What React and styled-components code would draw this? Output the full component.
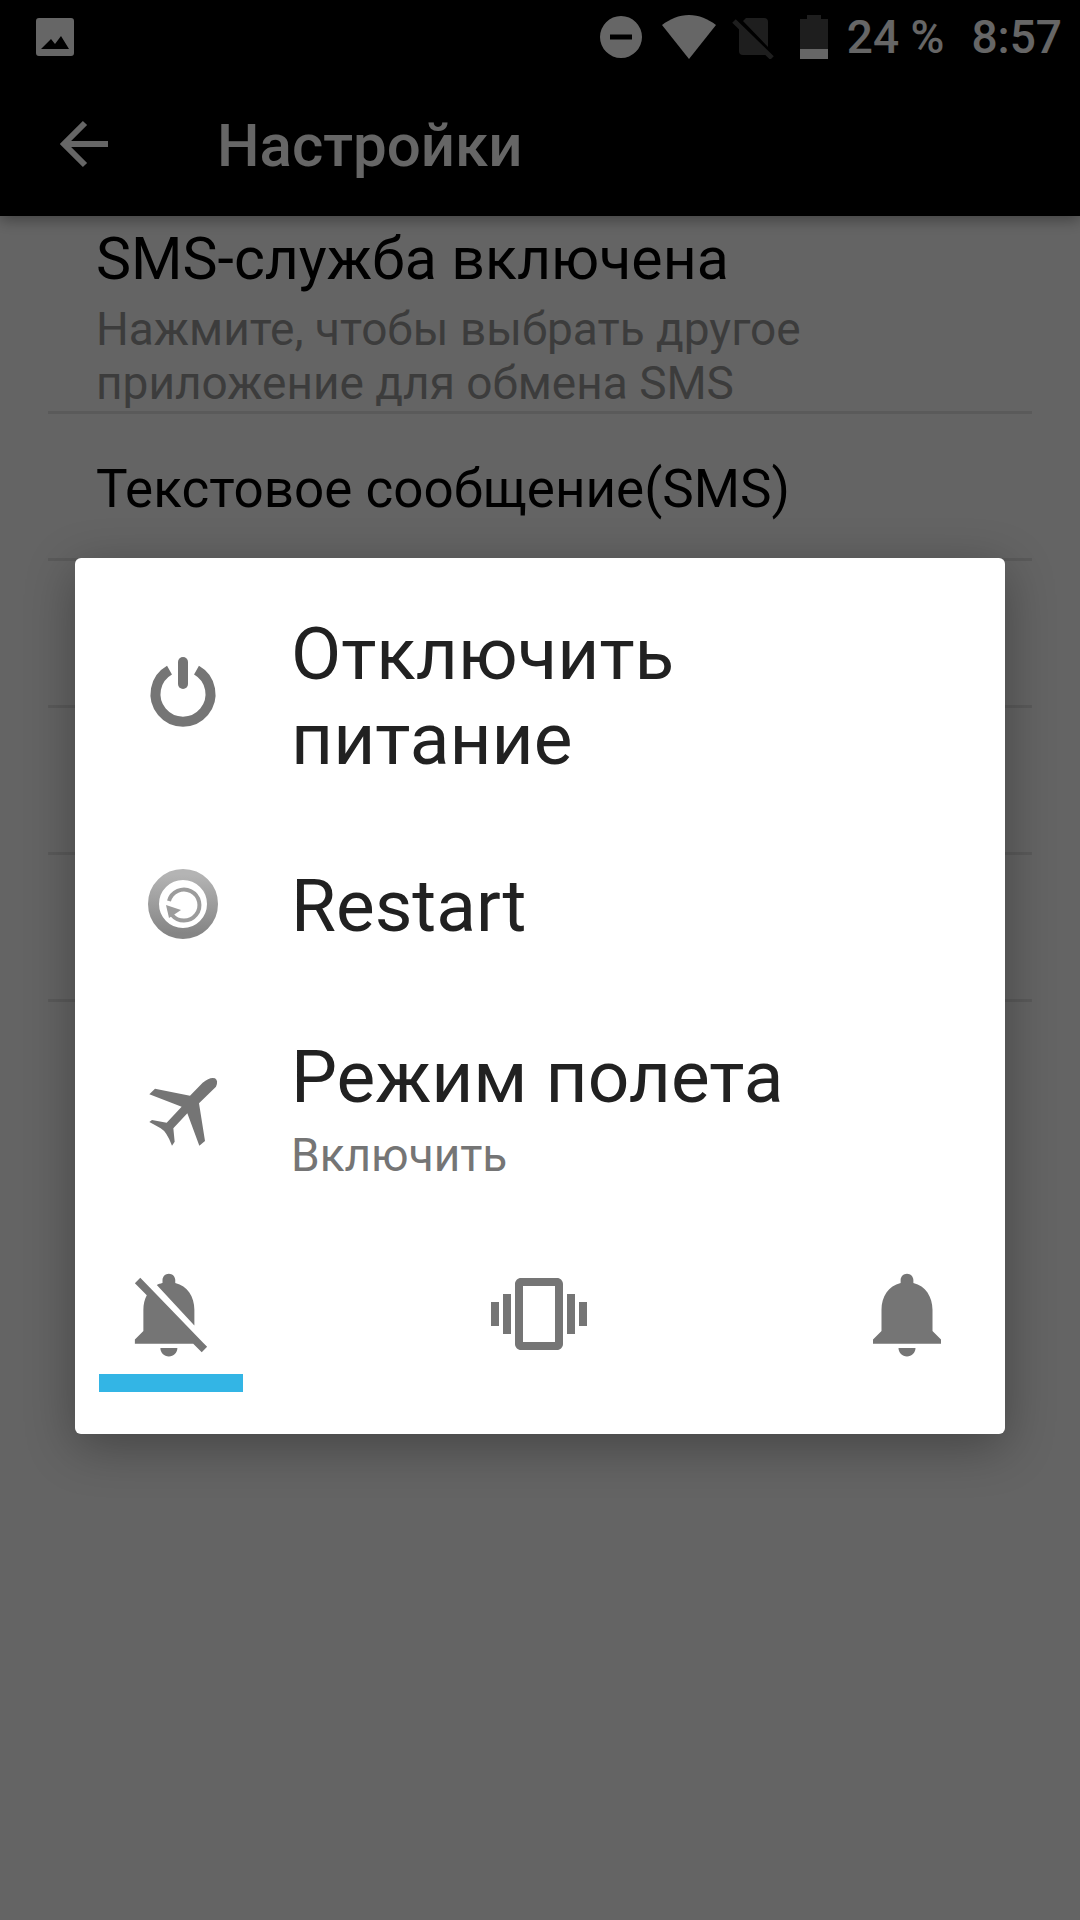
import React from 'react'
import styled, { createGlobalStyle } from 'styled-components'

const GlobalStyle = createGlobalStyle`
  html, body {
    margin: 0;
    padding: 0;
    background: #fafafa;
    font-family: Roboto, "Noto Sans", sans-serif;
  }
`

const Page = styled.div`
  position: relative;
  width: 1080px;
  height: 1920px;
  overflow: hidden;
  background: #fafafa;
`

const Header = styled.header`
  position: relative;
  z-index: 1;
  background: #000;
  box-shadow: 0 4px 14px rgba(0, 0, 0, 0.35);
`

const StatusBar = styled.div`
  height: 72px;
  box-sizing: border-box;
  display: flex;
  align-items: center;
  padding: 1px 18px 0 36px;
  color: #fff;
`

const StatusIcons = styled.div`
  margin-left: auto;
  display: flex;
  align-items: center;
`

const StatusGlyph = styled.svg`
  flex: none;
  margin-left: ${(p) => p.$left || 0}px;
`

const StatusText = styled.span`
  font-size: 46px;
  font-weight: 500;
  margin-left: ${(p) => p.$left}px;
`

const Toolbar = styled.div`
  height: 144px;
  display: flex;
  align-items: center;
  padding-left: 60px;
  color: #fff;
`

const ToolbarTitle = styled.h1`
  margin: 0 0 0 109px;
  font-size: 60px;
  font-weight: 500;
  line-height: 64px;
  position: relative;
  top: 2px;
`

const Row = styled.div`
  height: ${(p) => p.$height}px;
  box-sizing: border-box;
  margin: 0 48px;
  padding: ${(p) => p.$top || 0}px 48px 0;
  border-bottom: 3px solid #e1e1e1;
`

const RowTitle = styled.div`
  font-size: ${(p) => p.$size}px;
  line-height: 64px;
  color: #000;
`

const RowSummary = styled.div`
  font-size: 46px;
  line-height: 54px;
  color: #979797;
  margin-top: 11px;
`

const Scrim = styled.div`
  position: absolute;
  inset: 0;
  z-index: 2;
  background: rgba(0, 0, 0, 0.6);
  padding: 558px 75px 0;
`

const Dialog = styled.div`
  height: 876px;
  box-sizing: border-box;
  padding-top: 54px;
  background: #fff;
  border-radius: 6px;
  box-shadow: 0 12px 50px rgba(0, 0, 0, 0.32);
`

const Item = styled.div`
  height: ${(p) => p.$height}px;
  display: flex;
  align-items: center;
  padding-left: 71px;
  box-sizing: border-box;
`

const IconSlot = styled.div`
  width: 74px;
  height: 74px;
  flex: none;
  display: flex;
  align-items: center;
  justify-content: center;
  margin-right: 71px;
  position: relative;
  top: ${(p) => p.$shift || 0}px;

  svg {
    flex: none;
  }
`

const ItemLabel = styled.div`
  font-size: 73px;
  line-height: 85px;
  color: #212121;
`

const ItemStatus = styled.div`
  font-size: 46px;
  line-height: 56px;
  color: #757575;
  margin-top: 7px;
`

const Tabs = styled.div`
  display: flex;
  justify-content: space-between;
  padding: 0 26px 0 24px;
  margin-top: 76px;
`

const Tab = styled.div`
  width: 144px;
  height: 129px;
  display: flex;
  flex-direction: column;
  align-items: center;
`

const TabIcon = styled.div`
  height: 102px;
  display: flex;
  align-items: center;
  justify-content: center;
`

const TabBar = styled.div`
  width: 144px;
  height: 18px;
  margin-top: 9px;
  background: ${(p) => (p.$active ? '#33b5e5' : 'transparent')};
`

const GalleryIcon = () => (
  <svg width="38" height="38" viewBox="0 0 38 38">
    <path
      fillRule="evenodd"
      fill="currentColor"
      d="M3 0h32a3 3 0 0 1 3 3v32a3 3 0 0 1-3 3H3a3 3 0 0 1-3-3V3a3 3 0 0 1 3-3zM5 31h28l-8-13-6 8-4-5z"
    />
  </svg>
)

const MinusIcon = () => (
  <StatusGlyph width="42" height="42" viewBox="0 0 42 42">
    <path
      fillRule="evenodd"
      fill="currentColor"
      d="M21 0a21 21 0 1 1 0 42a21 21 0 0 1 0-42zM10 18.5v5h22v-5z"
    />
  </StatusGlyph>
)

const WifiIcon = () => (
  <StatusGlyph $left={20} width="54" height="44" viewBox="0 0 54 44">
    <path fill="currentColor" d="M27 44L0 10C8 4 17 0 27 0s19 4 27 10z" />
  </StatusGlyph>
)

const NoSimIcon = () => (
  <StatusGlyph $left={16} width="42" height="44" viewBox="0 0 42 44">
    <path fill="#4d4d4d" d="M14 3H32a4 4 0 0 1 4 4V32L11 6zM7 11L35 40H11a4 4 0 0 1-4-4z" />
    <path fill="none" stroke="#4d4d4d" strokeWidth="5" d="M2 6L40 43" />
  </StatusGlyph>
)

const BatteryIcon = () => (
  <StatusGlyph $left={26} width="28" height="44" viewBox="0 0 28 44">
    <path fill="#4d4d4d" d="M7 0h14v4h7v30H0V4h7z" />
    <path fill="currentColor" d="M0 34h28v10H0z" />
  </StatusGlyph>
)

const BackIcon = () => (
  <svg width="48" height="48" viewBox="0 0 48 48">
    <path fill="none" stroke="currentColor" strokeWidth="6" d="M48 24H5M25 3L4 24l21 21" />
  </svg>
)

const PowerIcon = () => (
  <svg width="74" height="74" viewBox="0 0 74 74">
    <path
      fill="none"
      stroke="#757575"
      strokeWidth="10"
      d="M23.5 13.2a27.5 27.5 0 1 0 27 0"
    />
    <path fill="none" stroke="#757575" strokeWidth="10" strokeLinecap="round" d="M37 5v22" />
  </svg>
)

const RestartIcon = () => (
  <svg width="70" height="70" viewBox="0 0 70 70">
    <defs>
      <linearGradient id="restartGrad" x1="0" y1="0" x2="0" y2="1">
        <stop offset="0" stopColor="#b4b4b4" />
        <stop offset="1" stopColor="#858585" />
      </linearGradient>
    </defs>
    <circle cx="35" cy="35" r="29.5" fill="none" stroke="url(#restartGrad)" strokeWidth="11" />
    <path
      fill="none"
      stroke="#9c9c9c"
      strokeWidth="4"
      d="M21 32a15.5 15.5 0 1 1 3 14"
    />
    <path fill="#9c9c9c" d="M18 36l15 5-12 8z" />
  </svg>
)

const PlaneIcon = () => (
  <svg width="110" height="100" viewBox="-6 0 330 300">
    <path
      fill="#757575"
      d="M218 68Q240 50 255 55Q266 62 258 80L207 130L225 243L208 257L172 160L130 205L134 245L126 257Q110 215 92 205Q75 195 58 186L66 180L110 188L155 140L58 103L75 86L180 107Z"
    />
  </svg>
)

const BellOffIcon = () => (
  <svg width="102" height="102" viewBox="0.5 0 24 24">
    <path
      fill="#757575"
      d="M20 18.69L7.84 6.14 5.27 3.49 4 4.76l2.8 2.8v.01c-.52.99-.8 2.16-.8 3.42v5l-2 2v1h13.73l2 2L21 19.72l-1-1.03zM12 22c1.11 0 2-.89 2-2h-4c0 1.11.89 2 2 2zm6-7.32V11c0-3.08-1.64-5.64-4.5-6.32V4c0-.83-.67-1.5-1.5-1.5s-1.5.67-1.5 1.5v.68c-.15.03-.29.08-.42.12-.1.03-.2.07-.3.11h-.01c-.2.08-.4.17-.59.27-.01 0-.01 0-.02.01L18 14.68z"
    />
  </svg>
)

const VibrateIcon = () => (
  <svg width="96" height="96" viewBox="0 0 24 24">
    <path
      fill="#757575"
      d="M0 15h2V9H0v6zm3 2h2V7H3v10zm19-8v6h2V9h-2zm-3 8h2V7h-2v10zM16.5 3h-9C6.67 3 6 3.67 6 4.5v15c0 .83.67 1.5 1.5 1.5h9c.83 0 1.5-.67 1.5-1.5v-15c0-.83-.67-1.5-1.5-1.5zM16 19H8V5h8v14z"
    />
  </svg>
)

const BellIcon = () => (
  <svg width="102" height="102" viewBox="0 0 24 24">
    <path
      fill="#757575"
      d="M12 22c1.1 0 2-.9 2-2h-4c0 1.1.9 2 2 2zm6-6v-5c0-3.07-1.63-5.64-4.5-6.32V4c0-.83-.67-1.5-1.5-1.5s-1.5.67-1.5 1.5v.68C7.64 5.36 6 7.92 6 11v5l-2 2v1h16v-1l-2-2z"
    />
  </svg>
)

export default function App() {
  return (
    <Page>
      <GlobalStyle />
      <Header>
        <StatusBar>
          <GalleryIcon />
          <StatusIcons>
            <MinusIcon />
            <WifiIcon />
            <NoSimIcon />
            <BatteryIcon />
            <StatusText $left={19}>24 %</StatusText>
            <StatusText $left={27}>8:57</StatusText>
          </StatusIcons>
        </StatusBar>
        <Toolbar>
          <BackIcon />
          <ToolbarTitle>Настройки</ToolbarTitle>
        </Toolbar>
      </Header>

      <Row $height={198} $top={11}>
        <RowTitle $size={59}>SMS-служба включена</RowTitle>
        <RowSummary>
          Нажмите, чтобы выбрать другое
          <br />
          приложение для обмена SMS
        </RowSummary>
      </Row>
      <Row $height={147} $top={43}>
        <RowTitle $size={53}>Текстовое сообщение(SMS)</RowTitle>
      </Row>
      <Row $height={147} />
      <Row $height={147} />
      <Row $height={147} />

      <Scrim>
        <Dialog>
          <Item $height={170}>
            <IconSlot $shift={-3}>
              <PowerIcon />
            </IconSlot>
            <ItemLabel>
              Отключить
              <br />
              питание
            </ItemLabel>
          </Item>
          <Item $height={249}>
            <IconSlot $shift={-3}>
              <RestartIcon />
            </IconSlot>
            <ItemLabel>Restart</ItemLabel>
          </Item>
          <Item $height={156}>
            <IconSlot $shift={1}>
              <PlaneIcon />
            </IconSlot>
            <div>
              <ItemLabel>Режим полета</ItemLabel>
              <ItemStatus>Включить</ItemStatus>
            </div>
          </Item>
          <Tabs>
            <Tab>
              <TabIcon>
                <BellOffIcon />
              </TabIcon>
              <TabBar $active />
            </Tab>
            <Tab>
              <TabIcon>
                <VibrateIcon />
              </TabIcon>
              <TabBar />
            </Tab>
            <Tab>
              <TabIcon>
                <BellIcon />
              </TabIcon>
              <TabBar />
            </Tab>
          </Tabs>
        </Dialog>
      </Scrim>
    </Page>
  )
}
